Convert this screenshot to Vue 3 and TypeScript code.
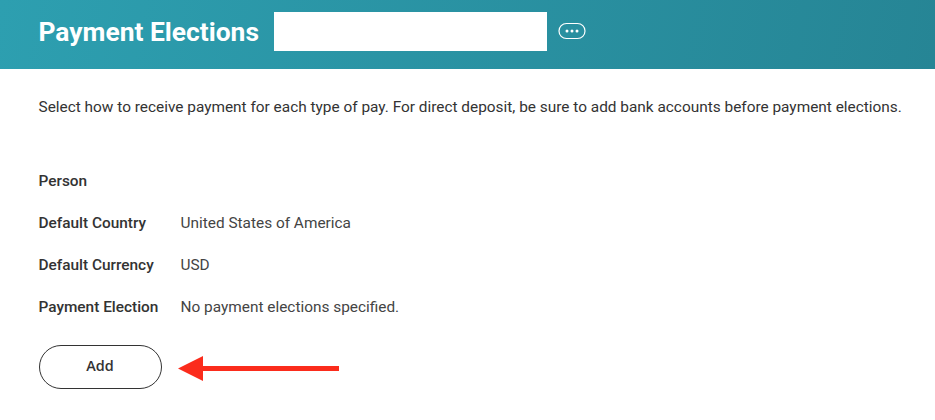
<script setup lang="ts">
const rows: { label: string; value: string }[] = [
  { label: 'Person', value: '' },
  { label: 'Default Country', value: 'United States of America' },
  { label: 'Default Currency', value: 'USD' },
  { label: 'Payment Election', value: 'No payment elections specified.' },
]
</script>

<template>
  <div class="page">
    <header class="banner">
      <h1 class="title">Payment Elections</h1>
      <div class="redaction"></div>
      <button class="more" aria-label="More">
        <svg width="28" height="18" viewBox="0 0 28 18">
          <rect x="1" y="1.5" width="26" height="15" rx="7.5" fill="none" stroke="#fff" stroke-width="1.2" />
          <circle cx="9" cy="9" r="1.5" fill="#fff" />
          <circle cx="14" cy="9" r="1.5" fill="#fff" />
          <circle cx="19" cy="9" r="1.5" fill="#fff" />
        </svg>
      </button>
    </header>
    <main class="content">
      <p class="intro">Select how to receive payment for each type of pay. For direct deposit, be sure to add bank accounts before payment elections.</p>
      <dl class="fields">
        <div v-for="row in rows" :key="row.label" class="row">
          <dt class="label">{{ row.label }}</dt>
          <dd class="value">{{ row.value }}</dd>
        </div>
      </dl>
      <div class="actions">
        <button class="add">Add</button>
        <svg class="arrow" width="161" height="25" viewBox="0 0 161 25">
          <polygon points="0,12.5 25,0 25,10 161,10 161,15 25,15 25,25" fill="#fb2c1c" />
        </svg>
      </div>
    </main>
  </div>
</template>

<style>
html, body { margin: 0; background: #fff; }
</style>

<style scoped>
.page {
  width: 935px;
  height: 420px;
  overflow: hidden;
  background: #fff;
  font-family: Roboto, sans-serif;
  color: #333;
}
.banner {
  height: 69px;
  box-sizing: border-box;
  padding: 12px 0 0 38.5px;
  display: flex;
  align-items: flex-start;
  background: linear-gradient(100deg, #2d9fb0 0%, #268595 100%);
}
.title {
  margin: 0;
  width: 235.5px;
  flex: none;
  height: 39px;
  line-height: 40px;
  font-size: 26.4px;
  font-weight: 700;
  color: #fff;
}
.redaction {
  width: 273px;
  height: 39px;
  flex: none;
  background: #fff;
}
.more {
  margin: 10px 0 0 11px;
  padding: 0;
  border: 0;
  background: none;
  width: 28px;
  height: 18px;
  display: block;
}
.more svg { display: block; }
.content { padding: 28px 0 0 38.5px; }
.intro {
  margin: 0;
  font-size: 15.4px;
  line-height: 21px;
  white-space: nowrap;
}
.fields { margin: 53px 0 0; }
.row {
  display: flex;
  height: 42px;
  line-height: 20px;
  font-size: 15.4px;
}
.label {
  width: 142px;
  flex: none;
  font-weight: 500;
}
.value { margin: 0; color: #444; }
.actions {
  margin-top: 6px;
  display: flex;
  align-items: flex-start;
  gap: 16px;
}
.add {
  width: 123px;
  height: 44px;
  border: 1px solid #333;
  border-radius: 22px;
  background: #fff;
  font-family: "Open Sans", sans-serif;
  font-size: 14.4px;
  font-weight: 600;
  color: #333;
  padding: 0 0 4px;
}
.arrow { display: block; margin-top: 11px; }
</style>
